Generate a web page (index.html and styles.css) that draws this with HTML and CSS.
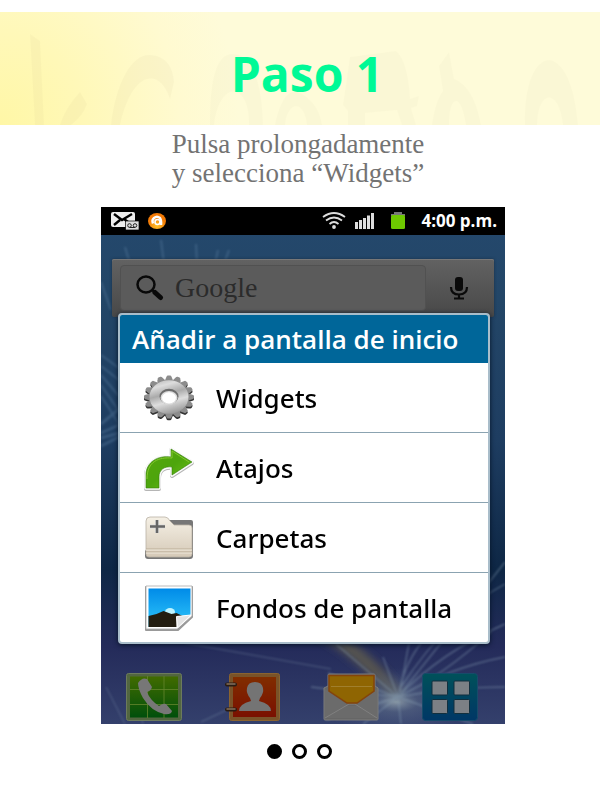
FILE: index.html
```html
<!DOCTYPE html>
<html lang="es">
<head>
<meta charset="utf-8">
<meta name="viewport" content="width=device-width, initial-scale=1">
<title>Paso 1</title>
<link rel="stylesheet" href="styles.css">
</head>
<body>
<header class="banner">
  <svg class="banner-art" viewBox="0 0 600 113" preserveAspectRatio="none" aria-hidden="true">
    <defs><filter id="haze"><feGaussianBlur stdDeviation=".7"/></filter></defs>
    <g fill="#9a8a60" opacity=".045" filter="url(#haze)">
      <path d="M30 22l10 7 4 84h-9z"/>
      <path d="M60 113Q65 96 80 80l7 12q-4 12-16 21z"/>
      <path d="M111 113C116 70 132 42 150 43c16 1 23 12 24 27l-4 17C160 55 132 58 120 113z"/>
    </g>
    <g fill="#9a8a60" opacity=".026" filter="url(#haze)">
      <path d="M210 113C210 70 215 42 233 42c19 0 29 28 30 71h-14c1-42-29-47-35 0z"/>
      <path d="M275 113C281 85 290 75 302 82c12 7 18 18 20 31h-15c-3-27-20-23-22 0z"/>
      <path d="M343 93L350 45l46-6q12 10 14 48l9-3-2 10-6 2 5 17h-14l-5-15-32 3v12h-17V99z"/>
      <path d="M439 54l10-14 5 27c14 5 23 23 27 46h-15c-5-34-17-30-17 0h-17c2-14 5-26 11-34z"/>
      <path d="M525 113C524 72 535 48 550 48c17 4 25 32 28 65h-15c-4-37-25-36-26 0z"/>
    </g>
  </svg>
  <h1 class="title">Paso 1</h1>
</header>
<main>
  <p class="caption">Pulsa prolongadamente<br>y selecciona “Widgets”</p>

  <div class="stage">
  <section class="phone" aria-label="Pantalla del teléfono">
    <svg class="wallpaper" viewBox="0 0 404 517" preserveAspectRatio="none" aria-hidden="true">
      <defs>
        <linearGradient id="sky" x1="0" y1="0" x2="0" y2="1">
          <stop offset="0" stop-color="#24486d"/><stop offset=".18" stop-color="#234667"/>
          <stop offset=".45" stop-color="#1e3d61"/><stop offset=".7" stop-color="#0e2745"/>
          <stop offset=".85" stop-color="#242b5a"/><stop offset="1" stop-color="#34406c"/>
        </linearGradient>
        <radialGradient id="flare"><stop offset="0" stop-color="#8796a4"/><stop offset=".3" stop-color="#62738c" stop-opacity=".5"/><stop offset="1" stop-color="#53658c" stop-opacity="0"/></radialGradient>
        <filter id="soft"><feGaussianBlur stdDeviation="4"/></filter>
        <filter id="fine"><feGaussianBlur stdDeviation=".9"/></filter>
      </defs>
      <rect width="404" height="517" fill="url(#sky)"/>
      <path d="M215 420Q262 445 297 490" fill="none" stroke="#57544f" stroke-width="14" filter="url(#soft)"/>
      <ellipse cx="295" cy="495" rx="75" ry="34" fill="url(#flare)"/>
      <g fill="none" stroke="#8ca4b8" stroke-width="1.4" opacity=".45" filter="url(#fine)">
        <path d="M297 490Q340 445 404 417M297 490Q350 460 404 450M300 486Q345 430 404 355M300 480Q350 405 404 377M297 490L282 450M297 490Q302 460 320 436M299 485L308 436M297 490L227 466M297 490L210 480M297 490L235 437M297 490Q350 480 404 480M297 490L225 513M297 490L372 517M297 490L262 517M297 490L300 517M297 490Q340 470 390 425"/>
        <path d="M84 436L230 462M5 480L24 517M35 490L42 517M100 515L170 482" opacity=".6"/>
      </g>
      <g fill="none" stroke="#6f93b5" opacity=".3" filter="url(#fine)">
        <path d="M24 40l5 17M60 33l3 24M95 37l1 20M117 43l-3 14M128 43l-5 14" stroke-width="2"/>
        <path d="M0 148L18 161M0 159L18 173M0 168L18 189M0 178L18 204M0 189L18 217M0 75L10 103" stroke-width="2"/>
        <path d="M0 217L18 202M0 226L18 218M0 231L18 226M0 239L18 230" stroke-width="3"/>
      </g>
    </svg>

    <div class="status">
      <svg width="28" height="18" viewBox="0 0 28 18" aria-hidden="true">
        <rect width="24" height="15" rx="2" fill="#eee"/>
        <path d="M3 2l8 6 10-6M3 13l6-5M13 7l4 3" fill="none" stroke="#000" stroke-width="2.4"/>
        <rect x="14.500" y="9" width="13.500" height="9" fill="#ddd" stroke="#000" stroke-width=".7"/>
        <circle cx="18.500" cy="13.500" r="1.800" fill="none" stroke="#222"/><circle cx="24" cy="13.500" r="1.800" fill="none" stroke="#222"/><path d="M18.500 15.500H24" stroke="#222"/>
      </svg>
      <svg width="18" height="18" viewBox="0 0 18 18" aria-hidden="true">
        <defs><radialGradient id="orb" cy=".8"><stop offset="0" stop-color="#ffc32b"/><stop offset="1" stop-color="#f37a05"/></radialGradient></defs>
        <ellipse cx="9" cy="9" rx="9" ry="8" fill="url(#orb)"/>
        <path d="M5 11.500Q3.500 8 6 6 9 3.500 12 6 13.500 8 13 13" fill="none" stroke="#fff" stroke-width="2.400"/><circle cx="9.500" cy="10" r="2.500" fill="none" stroke="#fff" stroke-width="1.600"/>
      </svg>
      <span class="spacer"></span>
      <svg width="24" height="18" viewBox="0 0 24 18" fill="none" stroke="#ddd" stroke-width="1.800" aria-hidden="true"><path d="M1 5Q12-3 23 5M4 8.500Q12 2.500 20 8.500M7.500 12Q12 8 16.500 12"/><circle cx="12" cy="15" r="1" fill="#fff"/></svg>
      <svg class="status-bars" width="20" height="18" viewBox="0 0 20 18" fill="#ddd" aria-hidden="true"><path d="M0 10h3v7H0zM4 8h3v9H4zM8 6h3v11H8zM12 3.500h3V17h-3zM16 1h3v16h-3z"/></svg>
      <svg width="16" height="18" viewBox="0 0 16 18" aria-hidden="true"><path d="M4 2V0h8v2h3v2H1V2z" fill="#777"/><rect x="1" y="3" width="14" height="14" rx="1.500" fill="#6ec800"/></svg>
      <time class="clock">4:00 p.m.</time>
    </div>

    <form class="search" role="search">
      <div class="search-box">
        <svg width="30" height="26" viewBox="0 0 30 26" fill="none" stroke="#090909" aria-hidden="true"><ellipse cx="11" cy="9.500" rx="8.500" ry="8" stroke-width="2.500"/><path d="M17 15l3 2" stroke-width="2.500"/><path d="M20 17.500l5.500 5" stroke-width="5" stroke-linecap="round"/></svg>
        <input class="search-input" type="text" placeholder="Google" aria-label="Buscar en Google">
      </div>
      <button class="mic" type="button" aria-label="Buscar por voz">
        <svg width="20" height="24" viewBox="0 0 20 24" fill="none" stroke="#0a0a0a" stroke-width="2.200" aria-hidden="true"><rect x="6" y="1" width="8" height="14" rx="3" fill="#0a0a0a" stroke="none"/><path d="M2 11q0 7.500 8 7.500T18 11M10 18v4M5 22.500h10"/></svg>
      </button>
    </form>

    <div class="dialog" role="dialog" aria-labelledby="dialog-title">
      <h2 class="dialog-title" id="dialog-title">Añadir a pantalla de inicio</h2>
      <ul class="options">
        <li><button class="option" type="button">
          <svg class="option-icon" viewBox="0 0 54 50" aria-hidden="true">
            <defs>
              <linearGradient id="steel" gradientUnits="userSpaceOnUse" x1="-8" y1="-25" x2="8" y2="25"><stop offset="0" stop-color="#aaa"/><stop offset=".22" stop-color="#ddd"/><stop offset=".42" stop-color="#aaa"/><stop offset=".6" stop-color="#ddd"/><stop offset="1" stop-color="#777"/></linearGradient>
              <path id="tooth" d="M-4.500-18l2-5.500q.3-1.500 1.500-1.500h2q1.200 0 1.500 1.500l2 5.500z"/>
              <g id="gear">
                <circle r="19"/>
                <use href="#tooth"/><use href="#tooth" transform="rotate(22.500)"/><use href="#tooth" transform="rotate(45)"/><use href="#tooth" transform="rotate(67.500)"/>
                <use href="#tooth" transform="rotate(90)"/><use href="#tooth" transform="rotate(112.500)"/><use href="#tooth" transform="rotate(135)"/><use href="#tooth" transform="rotate(157.500)"/>
                <use href="#tooth" transform="rotate(180)"/><use href="#tooth" transform="rotate(202.500)"/><use href="#tooth" transform="rotate(225)"/><use href="#tooth" transform="rotate(247.500)"/>
                <use href="#tooth" transform="rotate(270)"/><use href="#tooth" transform="rotate(292.500)"/><use href="#tooth" transform="rotate(315)"/><use href="#tooth" transform="rotate(337.500)"/>
              </g>
            </defs>
            <g transform="translate(27 24) scale(1 .86)">
              <use href="#gear" y="2" fill="#333"/>
              <use href="#gear" fill="#8c8c8c"/>
              <circle r="19.500" fill="url(#steel)"/>
              <ellipse cy="-.5" rx="9.500" ry="9" fill="#6d6d6d"/><ellipse cy="1" rx="8.500" ry="8" fill="#ddd"/><ellipse cy="1" rx="7" ry="6.500" fill="#fff"/>
            </g>
          </svg>Widgets</button></li>
        <li><button class="option" type="button">
          <svg class="option-icon" viewBox="0 0 54 50" aria-hidden="true">
            <defs><linearGradient id="leaf" x1="0" y1="0" x2="1" y2="1"><stop offset="0" stop-color="#55a60c"/><stop offset=".5" stop-color="#4da50d"/><stop offset="1" stop-color="#72c51b"/></linearGradient></defs>
            <path d="M4 46V33C4 20 16 13 29 15V7L50 20 30 33V25C22 24 17 28 17 35V46Z" fill="#aaa" stroke="#b5b5b5" stroke-width="4" stroke-linejoin="round"/>
            <path d="M4 45V32C4 19 16 12 29 14V6L50 19 30 32V24C22 23 17 27 17 34V45Z" fill="url(#leaf)" stroke="#fafafa" stroke-width="3.600" stroke-linejoin="round"/>
            <path d="M4 45V32C4 19 16 12 29 14V6L50 19 30 32V24C22 23 17 27 17 34V45Z" fill="url(#leaf)" stroke="#367f0b" stroke-width=".6"/>
            <path d="M5 36C5 18 17 14 30 15V8l17 11" fill="none" stroke="#83c72f" stroke-width="1"/>
          </svg>Atajos</button></li>
        <li><button class="option" type="button">
          <svg class="option-icon" viewBox="0 0 54 50" aria-hidden="true">
            <defs><linearGradient id="paper" x1="0" y1="0" x2="0" y2="1"><stop offset="0" stop-color="#f5f0e5"/><stop offset="1" stop-color="#d5c9b7"/></linearGradient></defs>
            <path d="M26 12V7h23q2 0 2 2v34q0 3-3 3H6q-3 0-3-3v-5z" fill="#777"/>
            <path d="M4 8q0-4 4-4h15q3 0 5 4l4 4h15q3 0 3 3v26q0 3-3 3H7q-3 0-3-3z" fill="url(#paper)" stroke="#b9b1a5" stroke-width=".8"/>
            <path d="M4 36h46M4 39h46" stroke="#b4a48e" stroke-width=".8"/><path d="M4 37h46M4 40h46" stroke="#f5efe3" stroke-width=".8"/>
            <path d="M15 7v13M8 13.500h15" stroke="#ddd" stroke-width="4"/><path d="M15 7v13M8 13.500h15" stroke="#666" stroke-width="2.500"/>
          </svg>Carpetas</button></li>
        <li><button class="option" type="button">
          <svg class="option-icon" viewBox="0 0 54 50" aria-hidden="true">
            <defs><linearGradient id="dawn" x1="0" y1="0" x2="0" y2="1"><stop offset="0" stop-color="#008be8"/><stop offset="1" stop-color="#30c7fb"/></linearGradient></defs>
            <path d="M4 4h46v30L36 47H4z" fill="#777" stroke="#999" stroke-width="2" stroke-linejoin="round"/>
            <path d="M4 3h46v30L35 46H4z" fill="#fff" stroke="#aaa" stroke-width=".8"/>
            <path d="M6.500 5.500h42V33H34v11H6.500z" fill="url(#dawn)"/><ellipse cx="28" cy="29" rx="5" ry="4" fill="#bff4ff"/>
            <path d="M6.500 33l8-2 7-3 8 3 5-1 6 3-6 1v10H6.500z" fill="#231d10"/>
            <path d="M34.500 33.500L49 32 35.500 45z" fill="#e4e4e4" stroke="#fff"/>
          </svg>Fondos de pantalla</button></li>
      </ul>
    </div>

    <nav class="dock" aria-label="Aplicaciones">
      <button class="app" type="button" aria-label="Teléfono"><svg viewBox="0 0 56 50" aria-hidden="true">
        <defs><linearGradient id="green" x1="0" y1="0" x2="0" y2="1"><stop offset="0" stop-color="#416b00"/><stop offset="1" stop-color="#004f0b"/></linearGradient></defs>
        <rect x=".5" y="1.500" width="55" height="47" rx="2" fill="#526640" stroke="#6c7a5d"/><rect x="4" y="4.500" width="48" height="41" fill="url(#green)"/><path d="M21.500 4v42M38 4v42M4 17.500h48M4 32.500h48" stroke="#65852d" stroke-width=".8"/>
        <path d="M12 11q4-6 9-4l5 8q-1 4-5 5 3 8 12 14 4-3 7-2l6 7q-1 4-8 3Q25 39 17 26 12 17 12 11z" fill="#777"/></svg></button>
      <button class="app" type="button" aria-label="Contactos"><svg viewBox="0 0 56 50" aria-hidden="true">
        <defs><linearGradient id="red" x1="0" y1="0" x2="0" y2="1"><stop offset="0" stop-color="#812d00"/><stop offset="1" stop-color="#7a1000"/></linearGradient></defs>
        <rect x="4.500" y="1.500" width="50" height="47" rx="2" fill="#795329" stroke="#8a632f"/><rect x="8" y="5" width="43" height="40" fill="url(#red)"/>
        <path d="M14 39q0-7 12-10l-1-3q-4-5-3-10 1-6 8-6 7 0 8 6 1 5-3 10l-1 3q12 3 12 10z" fill="#747474"/><path d="M2 12.500h8M2 37.500h8" stroke="#291b12" stroke-width="4" stroke-linecap="round"/><path d="M2 12h8M2 37h8" stroke="#85715d" stroke-width="1.500" stroke-linecap="round"/></svg></button>
      <button class="app" type="button" aria-label="Mensajes"><svg viewBox="0 0 56 50" aria-hidden="true">
        <path d="M1 16l4-2V3q0-1 1-1h45q1 0 1 1v11l3 2v31q0 1-1 1H2q-1 0-1-1z" fill="#666" stroke="#7c7c7c"/><path d="M2 17l24 17h6l22-17v29H2z" fill="#6b6b6b"/><path d="M2 46l24-14h6l22 14" fill="none" stroke="#808080"/>
        <path d="M6 3.500h45V19L34 31H24L6 19z" fill="#8f6502" stroke="#85440b" stroke-width="1.500"/><path d="M8 14.500h41" stroke="#a17f2d"/></svg></button>
      <button class="app" type="button" aria-label="Menú de aplicaciones"><svg viewBox="0 0 56 50" aria-hidden="true">
        <defs><linearGradient id="teal" x1="0" y1="0" x2="0" y2="1"><stop offset="0" stop-color="#00515a"/><stop offset="1" stop-color="#003766"/></linearGradient></defs>
        <rect x=".5" y="1.500" width="55" height="47" rx="3" fill="url(#teal)" stroke="#174b6a"/><g fill="#7c8085" stroke="#122f3e"><rect x="10" y="9" width="15.500" height="14" rx="1"/><rect x="32" y="9" width="15.500" height="14" rx="1"/><rect x="10" y="27.500" width="15.500" height="14" rx="1"/><rect x="32" y="27.500" width="15.500" height="14" rx="1"/></g></svg></button>
    </nav>
  </section>
  </div>

  <nav class="dots" aria-label="Pasos">
    <button class="dot dot-on" type="button" aria-label="Paso 1"></button>
    <button class="dot" type="button" aria-label="Paso 2"></button>
    <button class="dot" type="button" aria-label="Paso 3"></button>
  </nav>
</main>
</body>
</html>
```
FILE: styles.css
```css
* { box-sizing: border-box; }

body {
  margin: 0;
  padding-top: 12px;
  background: #fff;
  font-family: "Noto Sans", "Open Sans", sans-serif;
}

button {
  margin: 0;
  padding: 0;
  border: 0;
  background: none;
  font: inherit;
  color: inherit;
}

svg { display: block; flex: none; }

.banner {
  position: relative;
  background: radial-gradient(ellipse 240px 260px at 0 100%, #fff7a6, #fff8b8 35%, #fffad0 75%, #fefbd9);
}

.banner-art {
  position: absolute;
  inset: 0;
  width: 100%;
  height: 100%;
}

.title {
  position: relative;
  margin: 0;
  padding: 30px 0 19px 14px;
  font: bold 48px/64px "Open Sans", sans-serif;
  text-align: center;
  color: #00f996;
}

.caption {
  margin: 0;
  padding: 5px 4px 19px 0;
  font: 27px/29px "Palatino Linotype", "Book Antiqua", "Liberation Serif", serif;
  text-align: center;
  color: #737373;
}

.stage { padding-left: 6px; }

.phone {
  position: relative;
  max-width: 404px;
  margin: 0 auto;
}

.wallpaper {
  position: absolute;
  inset: 0;
  width: 100%;
  height: 100%;
}

.status, .search, .dialog, .dock { position: relative; }

.status {
  display: flex;
  align-items: center;
  height: 28px;
  padding: 0 8px 0 10px;
  gap: 9px;
  background: #000;
  color: #fff;
}

.status-bars { margin-right: 6px; }

.spacer { flex: 1; }

.clock {
  padding-left: 6px;
  font: bold 17px/20px "Open Sans", sans-serif;
}

.search {
  display: flex;
  height: 58px;
  margin: 24px 11px 0;
  padding: 6px 8px;
  border-radius: 2px;
  background: linear-gradient(#626262, #484848);
  box-shadow: 0 0 3px #192f47, inset 0 1px #777;
}

.search-box {
  display: flex;
  flex: 1;
  min-width: 0;
  align-items: center;
  gap: 10px;
  padding-left: 14px;
  border: 1px solid #515151;
  border-radius: 4px;
  background: #5b5b5b;
}

.search-input {
  flex: 1;
  min-width: 0;
  padding: 0;
  border: 0;
  outline: 0;
  background: none;
  font: 28px/34px "Liberation Serif", serif;
  color: #252525;
}

.search-input::placeholder { color: #2b2b2b; opacity: 1; }

.mic {
  display: flex;
  align-items: center;
  justify-content: center;
  width: 60px;
  padding-left: 5px;
}

.dialog {
  margin: -4px 15px 0 17px;
  border: 2px solid #a9bdca;
  border-radius: 4px;
  background: #fff;
  box-shadow: 0 1px 5px #071326;
  overflow: hidden;
}

.dialog-title {
  margin: 0;
  padding: 8px 12px;
  background: #006699;
  font: 600 26px/32px "Open Sans", sans-serif;
  color: #fff;
}

.options {
  margin: 0;
  padding: 0;
  list-style: none;
}

.options li + li { border-top: 1px solid #8ba3b1; }

.option {
  display: flex;
  align-items: center;
  gap: 20px;
  width: 100%;
  height: 69px;
  padding-left: 22px;
  font: 500 26px/34px "Noto Sans", sans-serif;
  text-align: left;
  color: #000;
}

.option-icon { width: 54px; height: 50px; }

.dock {
  display: flex;
  justify-content: space-between;
  padding: 28px 27px 2px 25px;
}

.app { width: 56px; }

.app svg { width: 100%; }

.dots {
  display: flex;
  justify-content: center;
  gap: 10px;
  padding: 20px 1px 41px 0;
}

.dot {
  width: 15px;
  height: 15px;
  border: 3px solid #000;
  border-radius: 50%;
}

.dot-on { background: #000; }
```
